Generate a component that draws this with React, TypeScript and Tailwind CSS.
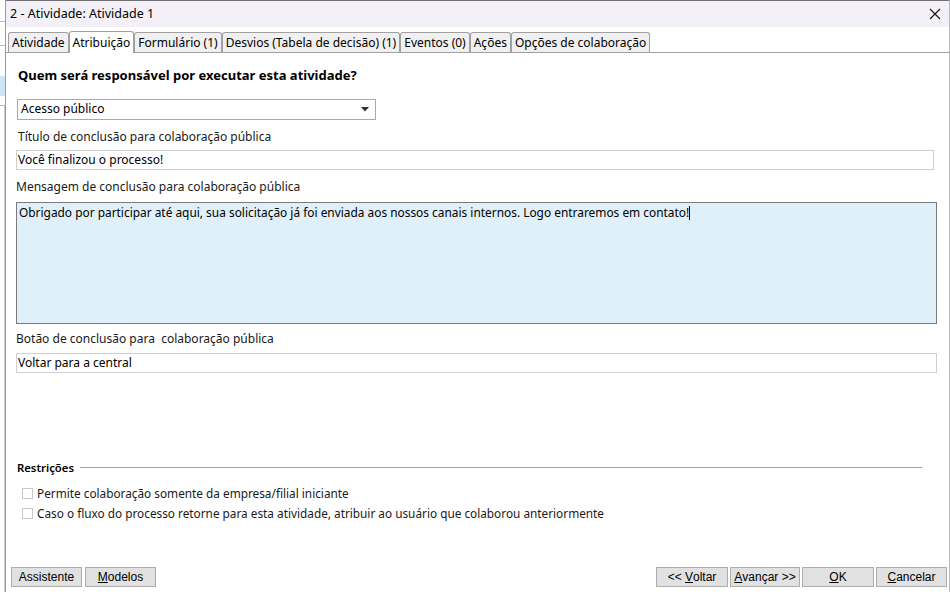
import { ReactNode } from "react"

const ui = { fontFamily: '"Noto Sans", "Open Sans", sans-serif' }
const btnFont = { fontFamily: '"Liberation Sans", Arial, sans-serif' }

const tabs = [
  "Atividade",
  "Atribuição",
  "Formulário (1)",
  "Desvios (Tabela de decisão) (1)",
  "Eventos (0)",
  "Ações",
  "Opções de colaboração",
]

function Btn({ children, w }: { children: ReactNode; w: string }) {
  return (
    <button
      style={btnFont}
      className={`${w} h-[20px] border border-[#adadad] bg-[#e1e1e1] text-[12px] leading-none text-black flex items-center justify-center`}
    >
      {children}
    </button>
  )
}

function Check({ label }: { label: string }) {
  return (
    <div className="flex items-center gap-[4px] h-[16px]">
      <span className="w-[11px] h-[11px] border border-[#c8c8c8] bg-white" />
      <span className="text-[11.8px] text-[#1a1a1a]">{label}</span>
    </div>
  )
}

export default function App() {
  return (
    <div style={ui} className="w-[950px] h-[592px] flex overflow-hidden bg-white text-black">
      {/* janela de fundo */}
      <div className="w-[6px] h-full flex flex-col bg-white border-r border-[#9a9a9a]">
        <div className="h-[22px] border-b border-[#bbb]" />
        <div className="h-[24px] border-b border-[#bbb]" />
        <div className="h-[30px]" />
        <div className="h-[20px] bg-[#cfe3f5]" />
        <div className="h-[10px] border-b border-[#bbb]" />
        <div className="flex-1 border-r border-[#ccc]" />
      </div>

      <div className="flex-1 flex flex-col border-r border-[#b8b8b8]">
        <div className="h-[27px] bg-[#f3f0f7] border-t border-[#6f6f6f] flex items-center justify-between pl-[4px] pr-[8px]">
          <span className="text-[12.5px]">2 - Atividade: Atividade 1</span>
          <svg width="12" height="12" viewBox="0 0 12 12">
            <path d="M1 1 L11 11 M11 1 L1 11" stroke="#111" strokeWidth="1.1" />
          </svg>
        </div>

        <div className="h-[26px] flex items-end pl-[2px] pr-[2px] border-b border-[#a0a0a0]">
          {tabs.map((t, i) => (
            <div
              key={t}
              className={
                i === 1
                  ? "h-[22px] -mb-px px-[3px] flex items-center bg-white border border-b-0 border-[#a0a0a0] rounded-t-[3px] text-[12px]"
                  : "h-[20px] px-[3px] flex items-center bg-[#f0f0f0] border border-b-0 border-[#a0a0a0] rounded-t-[3px] text-[12px]"
              }
            >
              {t}
            </div>
          ))}
        </div>

        <div className="flex-1 flex flex-col pl-[10px] pr-[8px]">
          <div className="mt-[13px] ml-[2px] text-[13px] font-bold">Quem será responsável por executar esta atividade?</div>

          <div className="mt-[13px] ml-[1px] w-[359px] h-[21px] border border-[#a8a8a8] flex items-center justify-between pl-[3px] pr-[6px]">
            <span className="text-[12px]">Acesso público</span>
            <svg width="8" height="5" viewBox="0 0 8 5">
              <path d="M0 0 H8 L4 4.5 Z" fill="#333" />
            </svg>
          </div>

          <div className="mt-[8px] ml-[2px] text-[12px] text-[#1a1a1a]">Título de conclusão para colaboração pública</div>
          <div className="mt-[4px] w-[918px] h-[20px] border border-[#cfcfcf] flex items-center pl-[1px] text-[12px]">
            Você finalizou o processo!
          </div>

          <div className="mt-[8px] text-[12px] text-[#1a1a1a]">Mensagem de conclusão para colaboração pública</div>
          <div className="mt-[6px] w-[921px] h-[122px] border border-[#7a7a7a] bg-[#dff0fa] pl-[2px] pt-[1px] text-[11.9px]">
            Obrigado por participar até aqui, sua solicitação já foi enviada aos nossos canais internos. Logo entraremos em contato!
            <span className="inline-block w-px h-[14px] bg-black align-middle" />
          </div>

          <div className="mt-[6px] text-[12px] text-[#1a1a1a]">Botão de conclusão para &nbsp;colaboração pública</div>
          <div className="mt-[5px] w-[921px] h-[20px] border border-[#cfcfcf] flex items-center pl-[1px] text-[12px]">
            Voltar para a central
          </div>

          <div className="mt-[87px] ml-[1px] flex items-center gap-[6px] w-[905px]">
            <span className="text-[11.3px] font-semibold">Restrições</span>
            <span className="flex-1 h-px bg-[#a0a0a0]" />
          </div>

          <div className="mt-[9px] ml-[6px] flex flex-col gap-[4px]">
            <Check label="Permite colaboração somente da empresa/filial iniciante" />
            <Check label="Caso o fluxo do processo retorne para esta atividade, atribuir ao usuário que colaborou anteriormente" />
          </div>

          <div className="mt-auto mb-[5px] -ml-[5px] -mr-[6px] flex items-center">
            <Btn w="w-[71px]">Assistente</Btn>
            <div className="w-[3px]" />
            <Btn w="w-[71px]">
              <u>M</u>odelos
            </Btn>
            <div className="flex-1" />
            <Btn w="w-[72px]">
              &lt;&lt;&nbsp;<u>V</u>oltar
            </Btn>
            <div className="w-[2px]" />
            <Btn w="w-[70px]">
              <u>A</u>vançar &gt;&gt;
            </Btn>
            <div className="w-[2px]" />
            <Btn w="w-[72px]">
              <u>O</u>K
            </Btn>
            <div className="w-[2px]" />
            <Btn w="w-[71px]">
              <u>C</u>ancelar
            </Btn>
          </div>
        </div>
      </div>
    </div>
  )
}
